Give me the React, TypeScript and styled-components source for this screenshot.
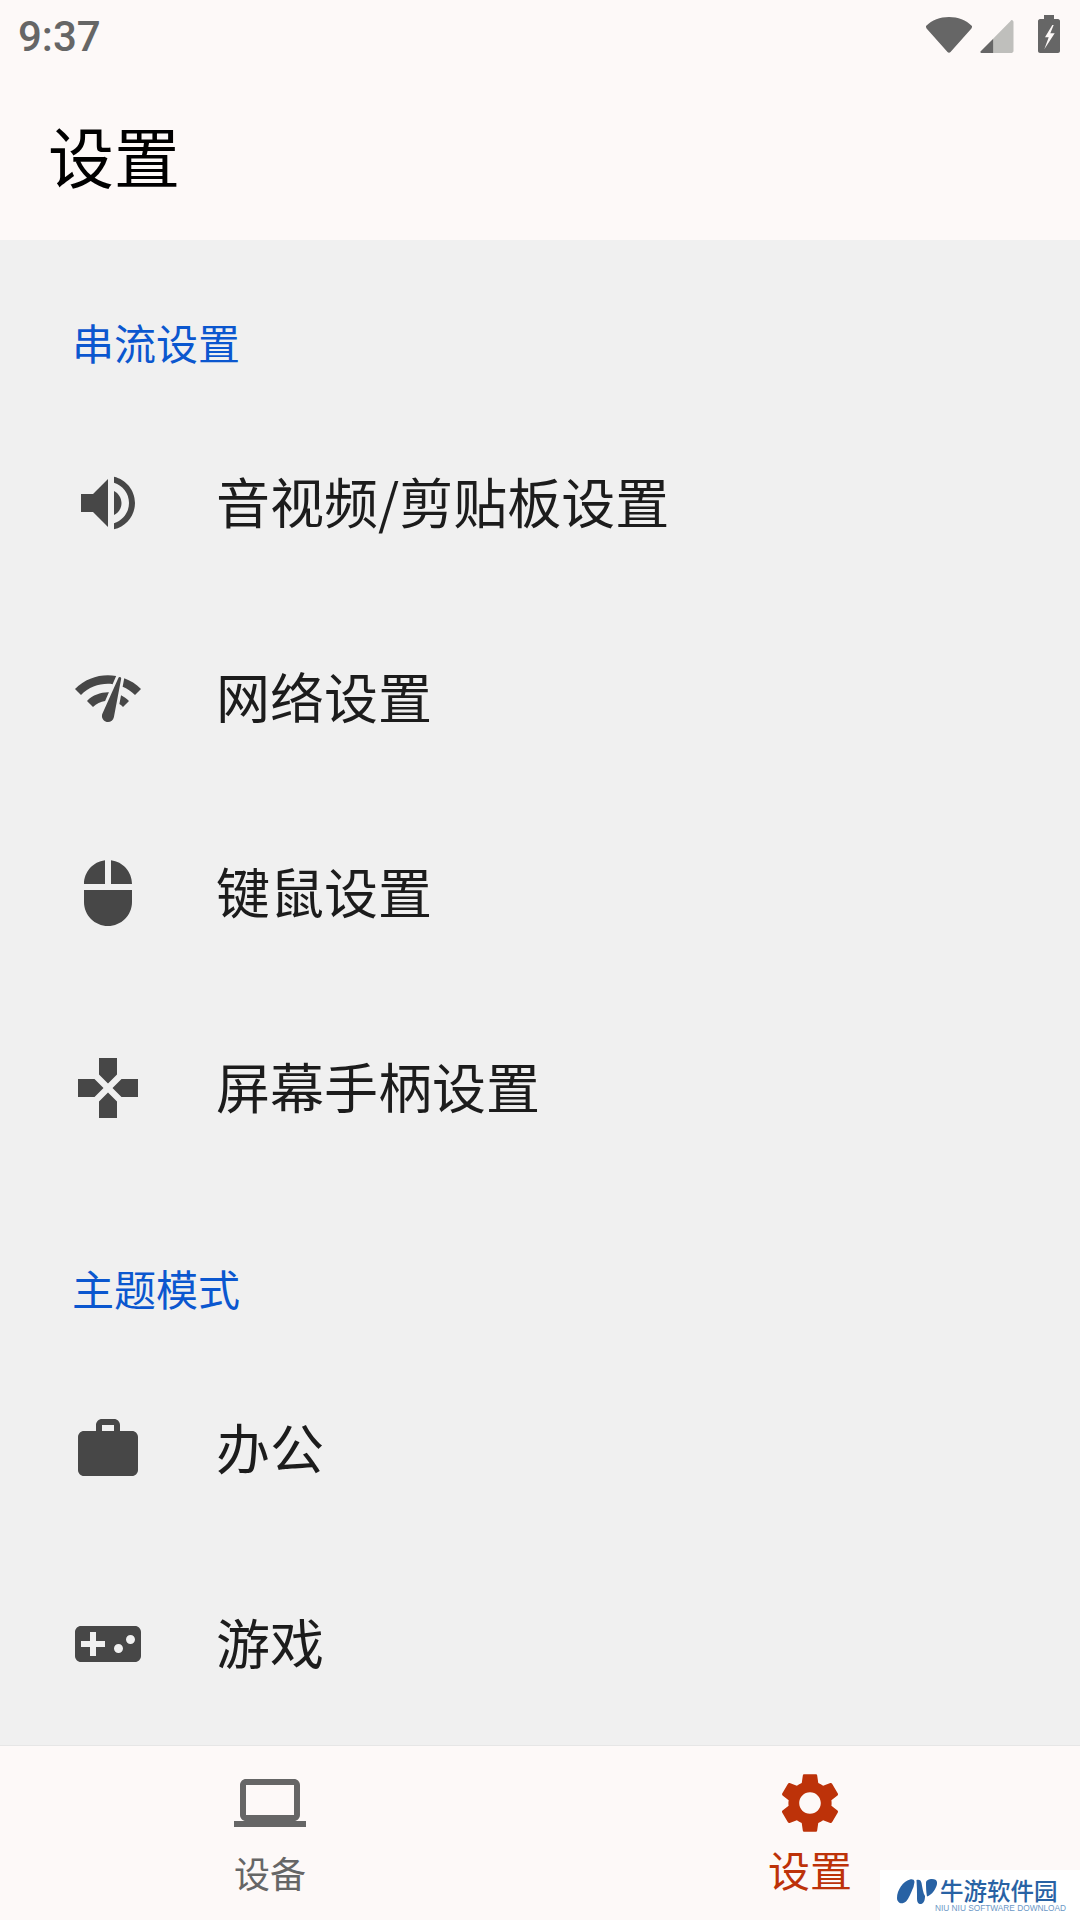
import { FC } from 'react';
import styled, { createGlobalStyle } from 'styled-components';

const icons = {
	volume:
		'M3 9v6h4l5 5V4L7 9H3zm13.5 3c0-1.77-1.02-3.29-2.5-4.03v8.05c1.48-.73 2.5-2.25 2.5-4.02zM14 3.23v2.06c2.89.86 5 3.54 5 6.71s-2.11 5.85-5 6.71v2.06c4.01-.91 7-4.49 7-8.77s-2.99-7.86-7-8.77z',
	network:
		'M15.9 5c-.17 0-.32.09-.41.23l-.07.15-5.18 11.65c-.16.29-.26.61-.26.96 0 1.11.9 2.01 2.01 2.01.96 0 1.77-.68 1.96-1.59l.01-.03L16.4 5.5c0-.28-.22-.5-.5-.5zM1 9l2 2c2.88-2.88 6.79-4.08 10.53-3.62l1.19-2.68C9.89 3.84 4.74 5.27 1 9zm20 2l2-2c-1.64-1.64-3.55-2.82-5.59-3.57l-.53 2.82c1.5.62 2.9 1.53 4.12 2.75zm-4 4l2-2c-.8-.8-1.7-1.42-2.66-1.89l-.55 2.92c.42.27.83.59 1.21.97zM5 13l2 2c1.13-1.13 2.56-1.79 4.03-2l1.28-2.88c-2.63-.08-5.3.87-7.31 2.88z',
	mouse:
		'M13 1.07V9h7c0-4.08-3.05-7.44-7-7.93zM4 15c0 4.42 3.58 8 8 8s8-3.58 8-8v-4H4v4zm7-13.93C7.05 1.56 4 4.92 4 9h7V1.07z',
	gamepad: 'M15 7.5V2H9v5.5l3 3 3-3zM7.5 9H2v6h5.5l3-3-3-3zM9 16.5V22h6v-5.5l-3-3-3 3zM16.5 9l-3 3 3 3H22V9h-5.5z',
	work: 'M20 6h-4V4c0-1.11-.89-2-2-2h-4c-1.11 0-2 .89-2 2v2H4c-1.11 0-1.99.89-1.99 2L2 19c0 1.11.89 2 2 2h16c1.11 0 2-.89 2-2V8c0-1.11-.89-2-2-2zm-6 0h-4V4h4v2z',
	game: 'M21 6H3c-1.1 0-2 .9-2 2v8c0 1.1.9 2 2 2h18c1.1 0 2-.9 2-2V8c0-1.1-.9-2-2-2zm-10 7H8v3H6v-3H3v-2h3V8h2v3h3v2zm4.5 2c-.83 0-1.5-.67-1.5-1.5s.67-1.5 1.5-1.5 1.5.67 1.5 1.5-.67 1.5-1.5 1.5zm4-3c-.83 0-1.5-.67-1.5-1.5S18.67 9 19.5 9s1.5.67 1.5 1.5-.67 1.5-1.5 1.5z',
	laptop: 'M20 18c1.1 0 1.99-.9 1.99-2L22 6c0-1.1-.9-2-2-2H4c-1.1 0-2 .9-2 2v10c0 1.1.9 2 2 2H0v2h24v-2h-4zM4 6h16v10H4V6z',
	settings:
		'M19.14 12.94c.04-.3.06-.61.06-.94 0-.32-.02-.64-.07-.94l2.03-1.58c.18-.14.23-.41.12-.61l-1.92-3.32c-.12-.22-.37-.29-.59-.22l-2.39.96c-.5-.38-1.03-.7-1.62-.94l-.36-2.54c-.04-.24-.24-.41-.48-.41h-3.84c-.24 0-.43.17-.47.41l-.36 2.54c-.59.24-1.13.57-1.62.94l-2.39-.96c-.22-.08-.47 0-.59.22L2.74 8.87c-.12.21-.08.47.12.61l2.03 1.58c-.05.3-.09.63-.09.94s.02.64.07.94l-2.03 1.58c-.18.14-.23.41-.12.61l1.92 3.32c.12.22.37.29.59.22l2.39-.96c.5.38 1.03.7 1.62.94l.36 2.54c.05.24.24.41.48.41h3.84c.24 0 .44-.17.47-.41l.36-2.54c.59-.24 1.13-.56 1.62-.94l2.39.96c.22.08.47 0 .59-.22l1.92-3.32c.12-.22.07-.47-.12-.61l-2.01-1.58zM12 15.6c-1.98 0-3.6-1.62-3.6-3.6s1.62-3.6 3.6-3.6 3.6 1.62 3.6 3.6-1.62 3.6-3.6 3.6z',
};

const sections = [
	{
		title: '串流设置',
		items: [
			{ icon: icons.volume, label: '音视频/剪贴板设置' },
			{ icon: icons.network, label: '网络设置' },
			{ icon: icons.mouse, label: '键鼠设置' },
			{ icon: icons.gamepad, label: '屏幕手柄设置' },
		],
	},
	{
		title: '主题模式',
		items: [
			{ icon: icons.work, label: '办公' },
			{ icon: icons.game, label: '游戏' },
		],
	},
];

const App: FC = () => (
	<Page>
		<GlobalStyle />
		<Header>
			<StatusBar>
				<Time>9:37</Time>
				<StatusIcons>
					<svg width="46" height="36" viewBox="0 0 46 36">
						<path fill="#666" d="M0 9C6 3 14 0 23 0s17 3 23 9c0 1 0 2-1 3L24.500 35c-.8 1-2.200 1-3 0L1 12C0 11 0 10 0 9z" />
					</svg>
					<svg width="34" height="33" viewBox="0 0 34 34">
						<path fill="#bfbfbc" d="M32 0c1 0 2 .8 2 2v30c0 1-1 2-2 2H1c-1 0-1.400-1-.700-1.700L31 1c.3-.5.600-1 1-1z" />
						<path fill="#666" d="M13 19.500V34H1c-1 0-1.400-1-.7-1.700z" />
					</svg>
					<svg width="22" height="38" viewBox="0 0 22 38">
						<path
							fill="#666"
							fillRule="evenodd"
							d="M6 0h10v4h4c1 0 2 1 2 2v30c0 1-1 2-2 2H2c-1 0-2-1-2-2V6c0-1 1-2 2-2h4zM14.300 10L7 22.300h3.700L6.300 34.300l10.400-16h-4.400l3.400-8.300z"
						/>
					</svg>
				</StatusIcons>
			</StatusBar>
			<Toolbar>设置</Toolbar>
		</Header>
		<Content>
			{sections.map((section) => (
				<Section key={section.title}>
					<SectionTitle>{section.title}</SectionTitle>
					{section.items.map((item) => (
						<Row key={item.label}>
							<RowIcon viewBox="0 0 24 24">
								<path d={item.icon} />
							</RowIcon>
							<RowLabel>{item.label}</RowLabel>
						</Row>
					))}
				</Section>
			))}
		</Content>
		<BottomNav>
			<Tab>
				<TabIcon viewBox="0 0 24 24">
					<path d={icons.laptop} />
				</TabIcon>
				<TabLabel>设备</TabLabel>
			</Tab>
			<Tab $active>
				<TabIcon viewBox="0 0 24 24">
					<path d={icons.settings} />
				</TabIcon>
				<TabLabel $active>设置</TabLabel>
			</Tab>
		</BottomNav>
		<Watermark>
			<svg width="40" height="25" viewBox="0 0 40 25">
				<path
					fill="#2862a4"
					d="M13 .5C6 2.500 0 11 0 19c0 5 5 7 9 3.500 3-3 5-9 7.500-14.500l1-5c0-2.500-2.500-3-4.500-2.500zM19.500 1c2.500-1 4.500 0 5 3 1 5 1.500 10 3.500 13 0 4-1 7.500-4 8-3 0-4-2-4-6 0-6 0-12-.5-18zM30 17.500c-1-5-1-10-1-13.500 0-3 3-4 6-4 4 0 5.500 2 5 5-1 5-5 11-10 12.500z"
				/>
			</svg>
			<WatermarkText>
				<WatermarkName>牛游软件园</WatermarkName>
				<WatermarkSub>NIU NIU SOFTWARE DOWNLOAD</WatermarkSub>
			</WatermarkText>
		</Watermark>
	</Page>
);

export default App;

const GlobalStyle = createGlobalStyle`
	body {
		margin: 0;
		font-family: "Noto Sans CJK SC", "Noto Sans", sans-serif;
	}
`;

const Page = styled.div`
	position: relative;
	display: flex;
	flex-direction: column;
	width: 1080px;
	height: 1920px;
	overflow: hidden;
	background: #f0f0f0;
`;

const Header = styled.header`
	height: 240px;
	background: #fdf9f8;
`;

const StatusBar = styled.div`
	display: flex;
	align-items: flex-start;
	justify-content: space-between;
	height: 72px;
	padding: 8px 20px 0 18px;
	box-sizing: border-box;
`;

const Time = styled.span`
	color: #666;
	font-family: Roboto, sans-serif;
	font-size: 42px;
	font-weight: 500;
	line-height: 58px;
`;

const StatusIcons = styled.div`
	display: flex;
	align-items: flex-end;
	gap: 8px;
	height: 45px;

	svg:last-child {
		margin-left: 16px;
	}
`;

const Toolbar = styled.h1`
	margin: 0;
	padding-left: 48px;
	color: #000;
	font-size: 66px;
	font-weight: 400;
	line-height: 164px;
`;

const Content = styled.main`
	flex: 1;
	padding-top: 1px;
`;

const Section = styled.section`
	& + & {
		padding-top: 2px;
	}
`;

const SectionTitle = styled.h2`
	margin: 71px 0 33px 72px;
	color: #0b57cf;
	font-size: 42px;
	font-weight: 400;
	line-height: 60px;
`;

const Row = styled.div`
	display: flex;
	align-items: center;
	gap: 72px;
	height: 195px;
	padding-left: 72px;
`;

const RowIcon = styled.svg`
	width: 72px;
	height: 72px;
	fill: #474747;
	flex-shrink: 0;
`;

const RowLabel = styled.span`
	margin-bottom: 3px;
	color: #1c1c1c;
	font-size: 54px;
	line-height: 72px;
`;

const BottomNav = styled.nav`
	display: grid;
	grid-template-columns: 1fr 1fr;
	height: 175px;
	box-sizing: border-box;
	border-top: 1px solid #e6e6e6;
	background: #fdf9f8;
`;

const Tab = styled.div<{ $active?: boolean }>`
	display: flex;
	flex-direction: column;
	align-items: center;
	padding-top: 21px;
	color: ${(p) => (p.$active ? '#bd3209' : '#666')};
`;

const TabIcon = styled.svg`
	width: 72px;
	height: 72px;
	fill: currentColor;
`;

const TabLabel = styled.span<{ $active?: boolean }>`
	font-size: ${(p) => (p.$active ? '42px' : '36px')};
	line-height: 60px;
	margin-top: ${(p) => (p.$active ? '0' : '3px')};
`;

const Watermark = styled.div`
	position: absolute;
	right: 0;
	bottom: 0;
	display: flex;
	align-items: flex-start;
	gap: 3px;
	box-sizing: border-box;
	width: 200px;
	height: 50px;
	padding: 8px 0 0 17px;
	background: #fff;

	svg {
		margin-top: 1px;
	}
`;

const WatermarkText = styled.div`
	display: flex;
	flex-direction: column;
	align-items: flex-start;
`;

const WatermarkName = styled.span`
	color: #2862a4;
	font-size: 23.500px;
	font-weight: 500;
	line-height: 24px;
	white-space: nowrap;
`;

const WatermarkSub = styled.span`
	margin: 1px 0 0 -5px;
	color: #6b97c6;
	font-family: "Liberation Sans", sans-serif;
	font-size: 8.300px;
	line-height: 10px;
	white-space: nowrap;
`;
